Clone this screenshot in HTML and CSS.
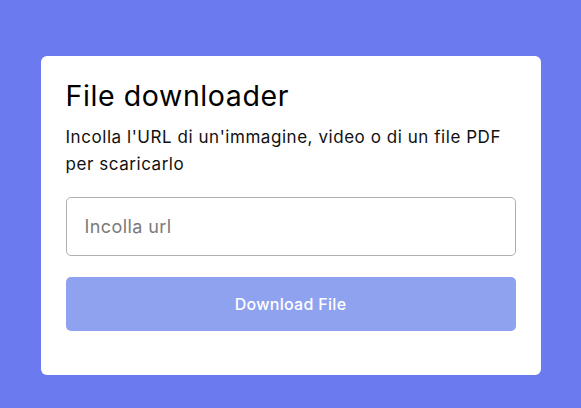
FILE: index.html
```html
<!DOCTYPE html>
<html lang="it">
<head>
<meta charset="utf-8">
<title>File downloader</title>
<link rel="stylesheet" href="styles.css">
</head>
<body>
<div class="wrapper">
  <header class="head">
    <h1 class="title">File downloader</h1>
    <p class="desc">Incolla l'URL di un'immagine, video o di un file PDF per scaricarlo</p>
  </header>
  <form class="form">
    <input class="url" type="url" placeholder="Incolla url">
    <button class="btn" type="button">Download File</button>
  </form>
</div>
</body>
</html>
```
FILE: styles.css
```css
* { box-sizing: border-box; margin: 0; padding: 0; }
html, body { height: 100%; }
body {
  background: #6b7bef;
  font-family: "Inter", "Open Sans", sans-serif;
  padding-top: 56px;
}
.wrapper {
  width: 500px;
  margin: 0 auto;
  background: #fff;
  border-radius: 6px;
  padding: 22px 25px 44px;
}
.title {
  font-size: 28.5px;
  font-weight: 400;
  letter-spacing: 0.6px;
  line-height: 36px;
  color: #000;
}
.desc {
  margin-top: 10px;
  font-size: 17px;
  letter-spacing: 0.55px;
  line-height: 27px;
  color: #111;
}
.form { margin-top: 19px; display: flex; flex-direction: column; gap: 21px; }
.url {
  height: 59px;
  border: 1px solid #b0b0b0;
  border-radius: 5px;
  padding: 0 18px;
  font-family: inherit;
  font-size: 18px;
  letter-spacing: 0.4px;
  outline: none;
}
.url::placeholder { color: #7a7a7a; }
.btn {
  height: 54px;
  border: none;
  border-radius: 5px;
  background: #8fa2f0;
  color: #fff;
  font-family: inherit;
  font-size: 16px;
  letter-spacing: 0.3px;
  font-weight: 500;
}
```
